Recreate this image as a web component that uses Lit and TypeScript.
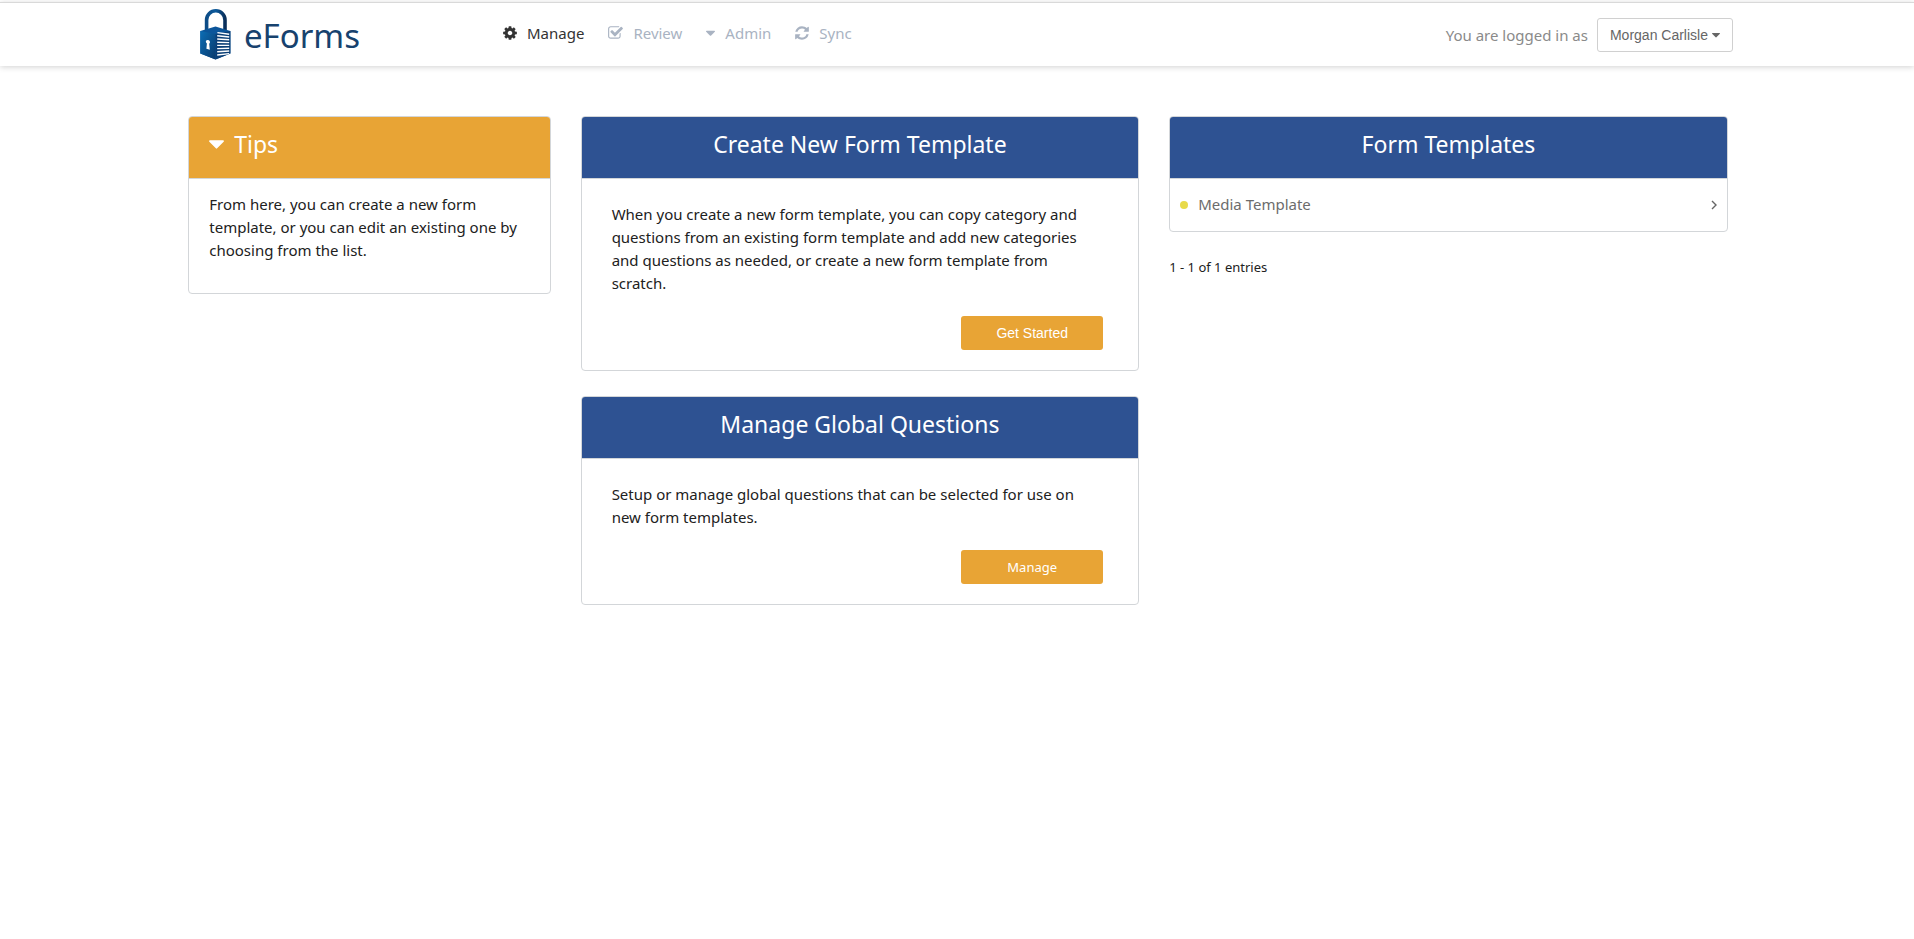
import { LitElement, html, css, svg } from "lit";
import { customElement, property } from "lit/decorators.js";

const COG =
  "M1152 896q0-106-75-181t-181-75-181 75-75 181 75 181 181 75 181-75 75-181zm512-109v222q0 12-8 23t-20 13l-185 28q-19 54-39 91 35 50 107 138 10 12 10 25t-9 23q-27 37-99 108t-94 71q-12 0-26-9l-138-108q-44 23-91 38-16 136-29 186-7 28-36 28h-222q-14 0-24.5-8.5t-11.5-21.5l-28-184q-49-16-90-37l-141 107q-10 9-25 9-14 0-25-11-126-114-165-168-7-10-7-23 0-12 8-23 15-21 51-66.5t54-70.5q-27-50-41-99l-183-27q-13-2-21-12.5t-8-23.5v-222q0-12 8-23t19-13l186-28q14-46 39-92-40-57-107-138-10-12-10-24 0-10 9-23 26-36 98.5-107.5t94.5-71.5q13 0 26 10l138 107q44-23 91-38 16-136 29-186 7-28 36-28h222q14 0 24.5 8.5t11.5 21.5l28 184q49 16 90 37l142-107q9-9 24-9 13 0 25 10 129 119 165 170 7 8 7 22 0 12-8 23-15 21-51 66.5t-54 70.5q26 50 41 98l183 28q13 2 21 12.5t8 23.5z";
const CHECK =
  "M1472 930v318q0 119-84.5 203.5t-203.5 84.5h-832q-119 0-203.5-84.5t-84.5-203.5v-832q0-119 84.5-203.5t203.5-84.5h832q63 0 117 25 15 7 18 23 3 17-9 29l-49 49q-10 10-23 10-3 0-9-2-23-6-45-6h-832q-66 0-113 47t-47 113v832q0 66 47 113t113 47h832q66 0 113-47t47-113v-254q0-13 9-22l64-64q10-10 23-10 6 0 12 3 20 8 20 29zm231-489l-814 814q-24 24-57 24t-57-24l-430-430q-24-24-24-57t24-57l110-110q24-24 57-24t57 24l263 263 647-647q24-24 57-24t57 24l110 110q24 24 24 57t-24 57z";
const REFRESH =
  "M1639 1056q0 5-1 7-64 268-268 434.5t-478 166.5q-146 0-282.5-55t-243.5-157l-129 129q-19 19-45 19t-45-19-19-45v-448q0-26 19-45t45-19h448q26 0 45 19t19 45-19 45l-137 137q71 66 161 102t187 36q134 0 250-65t186-179q11-17 53-117 8-23 30-23h192q13 0 22.5 9.5t9.5 22.5zm25-800v448q0 26-19 45t-45 19h-448q-26 0-45-19t-19-45 19-45l138-138q-148-137-349-137-134 0-250 65t-186 179q-11 17-53 117-8 23-30 23h-199q-13 0-22.5-9.5t-9.5-22.5v-7q65-268 270-434.5t480-166.5q146 0 284 55.5t245 156.5l130-129q19-19 45-19t45 19 19 45z";
const CARET =
  "M1408 704q0 26-19 45l-448 448q-19 19-45 19t-45-19l-448-448q-19-19-19-45t19-45 45-19h896q26 0 45 19t19 45z";

const icon = (path: string, box: string, cls: string) => html`
  <svg class="icon ${cls}" viewBox=${box} aria-hidden="true">${svg`<path d=${path}></path>`}</svg>
`;

const NAV = [
  { label: "Manage", path: COG, box: "128 0 1536 1792", cls: "w14", active: true },
  { label: "Review", path: CHECK, box: "64 0 1664 1792", cls: "w15", active: false },
  { label: "Admin", path: CARET, box: "384 0 1024 1792", cls: "w9", active: false },
  { label: "Sync", path: REFRESH, box: "128 0 1536 1792", cls: "w14", active: false },
];

@customElement("site-header")
export class SiteHeader extends LitElement {
  static styles = css`
    :host {
      display: block;
      border-top: 1px solid #d9d9d9;
      background: #fff;
      box-shadow: 0 1px 6px rgba(0, 0, 0, 0.18);
    }
    .bar {
      display: flex;
      align-items: center;
      height: 63px;
      padding: 0 181px 0 200px;
    }
    .brand {
      display: flex;
      align-items: center;
      gap: 12px;
      width: 303px;
      color: #17426e;
      font-size: 33px;
      line-height: 40px;
      text-decoration: none;
    }
    .word {
      padding-top: 3px;
    }
    .lock {
      width: 32px;
      height: 52px;
      padding-bottom: 2px;
    }
    nav {
      display: flex;
      gap: 24px;
      flex: 1;
      padding-bottom: 4px;
    }
    .link {
      display: flex;
      align-items: center;
      gap: 10px;
      color: #a9b3c2;
      font-size: 15px;
      line-height: 24px;
      text-decoration: none;
    }
    .active {
      color: #333;
    }
    .icon {
      height: 16px;
      fill: currentColor;
    }
    .w14 { width: 14px; }
    .w15 { width: 15px; }
    .w9 { width: 9px; }
    .w8 { width: 8px; height: 14px; }
    .user {
      display: flex;
      align-items: center;
      gap: 9px;
      color: #8a8a8a;
      font-size: 15px;
      line-height: 24px;
    }
    .account {
      display: flex;
      align-items: center;
      gap: 4px;
      height: 34px;
      padding: 0 12px;
      border: 1px solid #d0d0d0;
      border-radius: 3px;
      background: #fff;
      color: #666;
      font: 14px/20px "Liberation Sans", Arial, sans-serif;
    }
  `;

  render() {
    return html`
      <header class="bar">
        <a class="brand" href="#home">
          <svg class="lock" viewBox="0 0 32 52" aria-hidden="true">
            <defs>
              <linearGradient id="left" x1="0" y1="0" x2="1" y2="1">
                <stop offset="0" stop-color="#0b6db5"></stop>
                <stop offset="1" stop-color="#0a3a6c"></stop>
              </linearGradient>
              <linearGradient id="bow" x1="0" y1="0" x2="1" y2="0">
                <stop offset="0" stop-color="#0d4c86"></stop>
                <stop offset="0.5" stop-color="#0b5a9c"></stop>
                <stop offset="1" stop-color="#0a2f5a"></stop>
              </linearGradient>
            </defs>
            <path d="M6.6 24V12a9.2 9.2 0 0 1 18.4 0V24" fill="none" stroke="url(#bow)" stroke-width="3.6"></path>
            <path d="M0.3 23L15.5 18.5 30.4 23V45.5L15.5 51.5 0.3 45.5z" fill="#0b559a"></path>
            <path d="M0.3 23L15.5 26V51.5L0.3 45.5z" fill="url(#left)"></path>
            <path d="M15.5 26L30.4 23V45.5L15.5 51.5z" fill="#0b3f76"></path>
            <path
              d="M17.4 24.6L29.2 26.2M17.2 27.8L29.2 29M17.2 31L29.2 31.8M17.2 34.2L29.2 34.6M17.2 37.4L29.2 37.4M17.2 40.6L29.2 40.2M17.2 43.8L29.2 43M17.2 47L29.2 45.6"
              fill="none"
              stroke="#fff"
              stroke-width="1.4"
            ></path>
            <path d="M5.8 33.2a2.2 2.2 0 0 1 4.2 0.8q0 1.2-0.8 1.8l0.6 5.9-3.4-0.9 0.5-5.2q-1.1-0.9-1.1-2.4z" fill="#fff"></path>
          </svg>
          <span class="word">eForms</span>
        </a>
        <nav>
          ${NAV.map(
            (n) => html`<a class="link ${n.active ? "active" : ""}" href="#${n.label.toLowerCase()}"
              >${icon(n.path, n.box, n.cls)}<span>${n.label}</span></a
            >`
          )}
        </nav>
        <div class="user">
          <span>You are logged in as</span>
          <button class="account" type="button" aria-haspopup="menu">
            Morgan Carlisle ${icon(CARET, "384 0 1024 1792", "w8")}
          </button>
        </div>
      </header>
    `;
  }
}

@customElement("panel-card")
export class PanelCard extends LitElement {
  @property() heading = "";
  @property() tone: "blue" | "amber" = "blue";

  static styles = css`
    :host {
      display: block;
      border: 1px solid #d3d6d9;
      border-radius: 4px;
      overflow: hidden;
      background: #fff;
    }
    .head {
      display: flex;
      justify-content: center;
      box-sizing: border-box;
      height: 62px;
      margin: 0;
      padding: 10px 20px 0;
      border-bottom: 1px solid #d3d6d9;
      background: #2e5292;
      color: #fff;
      font-size: 23px;
      font-weight: 400;
      line-height: 34px;
    }
    .amber {
      justify-content: flex-start;
      background: #e8a435;
    }
    .toggle {
      display: flex;
      align-items: center;
      gap: 10px;
      height: 34px;
      padding: 0;
      border: 0;
      background: none;
      color: inherit;
      font: inherit;
    }
    .icon {
      width: 15px;
      height: 26px;
      fill: currentColor;
    }
  `;

  render() {
    return html`
      <h2 class="head ${this.tone}">
        ${this.tone === "amber"
          ? html`<button class="toggle" type="button" aria-expanded="true">
              ${icon(CARET, "384 0 1024 1792", "")}<span>${this.heading}</span>
            </button>`
          : this.heading}
      </h2>
      <slot></slot>
    `;
  }
}

@customElement("app-root")
export class AppRoot extends LitElement {
  static styles = css`
    :host {
      display: block;
      padding-top: 2px;
      background: #fff;
      color: #212121;
      font-family: "Noto Sans", "Open Sans", sans-serif;
      font-size: 15px;
      line-height: 23px;
    }
    .page {
      display: flex;
      align-items: flex-start;
      padding: 50px calc(9% - 1px) 0 calc(9% + 1px);
    }
    .side,
    .main {
      box-sizing: border-box;
      padding: 0 15px;
    }
    .side {
      width: 25%;
    }
    .main {
      width: 37.5%;
    }
    .stack {
      display: flex;
      flex-direction: column;
      gap: 25px;
    }
    p {
      margin: 0;
    }
    .tips {
      padding: 14px 20px 31px;
    }
    .body {
      display: flex;
      flex-direction: column;
      gap: 21px;
      padding: 24px 35px 20px 30px;
    }
    .action {
      align-self: flex-end;
      width: 142px;
      height: 34px;
      padding: 0;
      border: 0;
      border-radius: 3px;
      background: #e8a435;
      color: #fff;
      font: 14px/20px "Liberation Sans", Arial, sans-serif;
    }
    .alt {
      font: 13px/20px "Noto Sans", "Open Sans", sans-serif;
    }
    .row {
      display: flex;
      align-items: center;
      gap: 10px;
      padding: 14px 10px 15px;
      color: #6c6c6c;
      text-decoration: none;
    }
    .dot {
      width: 8px;
      height: 8px;
      border-radius: 50%;
      background: #e8da4a;
    }
    .name {
      flex: 1;
    }
    .chevron {
      width: 6px;
      height: 10px;
      fill: none;
      stroke: #666;
      stroke-width: 1.4;
    }
    .count {
      padding-top: 24px;
      font-size: 13px;
    }
  `;

  render() {
    return html`
      <site-header></site-header>
      <main class="page">
        <section class="side">
          <panel-card heading="Tips" tone="amber">
            <p class="tips">
              From here, you can create a new form template, or you can edit an existing one by choosing from the list.
            </p>
          </panel-card>
        </section>
        <section class="main stack">
          <panel-card heading="Create New Form Template">
            <div class="body">
              <p>
                When you create a new form template, you can copy category and questions from an existing form template
                and add new categories and questions as needed, or create a new form template from scratch.
              </p>
              <button class="action" type="button">Get Started</button>
            </div>
          </panel-card>
          <panel-card heading="Manage Global Questions">
            <div class="body">
              <p>Setup or manage global questions that can be selected for use on new form templates.</p>
              <button class="action alt" type="button">Manage</button>
            </div>
          </panel-card>
        </section>
        <section class="main">
          <panel-card heading="Form Templates">
            <a class="row" href="#media-template">
              <span class="dot"></span>
              <span class="name">Media Template</span>
              <svg class="chevron" viewBox="0 0 6 10" aria-hidden="true"><path d="M1 1l4 4-4 4"></path></svg>
            </a>
          </panel-card>
          <p class="count">1 - 1 of 1 entries</p>
        </section>
      </main>
    `;
  }
}
